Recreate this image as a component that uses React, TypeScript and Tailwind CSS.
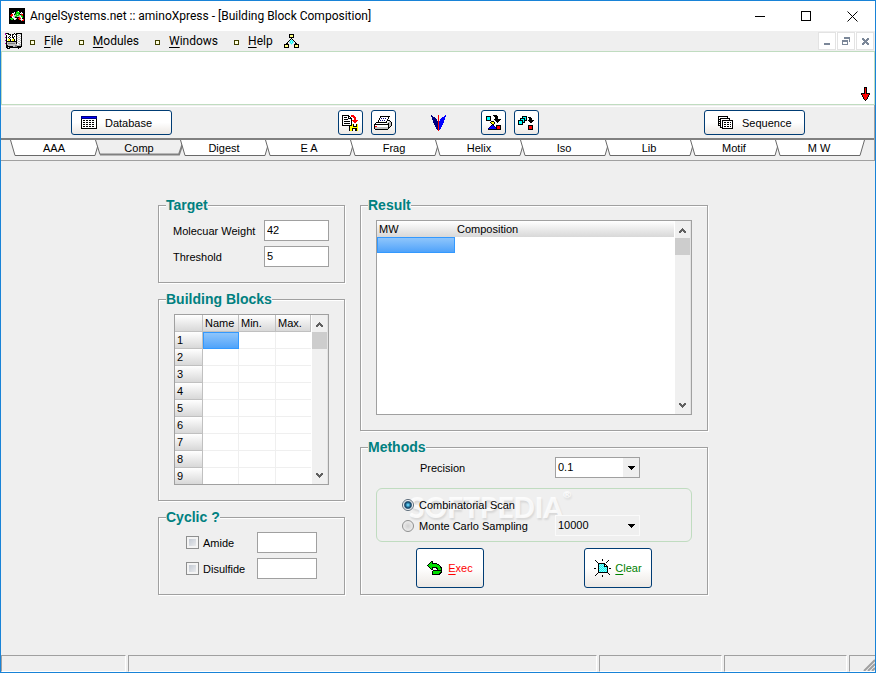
import React from 'react'

const COLORS: Record<string, string> = {
  k: '#000000',
  w: '#ffffff',
  g: '#c0c0c0',
  d: '#808080',
  r: '#ff0000',
  y: '#ffff00',
  l: '#ffff80',
  b: '#0000ff',
  n: '#000080',
  c: '#00ffff',
  t: '#a0f0f0',
  m: '#a000a0',
  v: '#00e000',
  s: '#7b8798',
  e: '#606060',
}

/* Small bitmap icons, one character per pixel */
function Sprite({ rows }: { rows: string[] }) {
  const width = Math.max(...rows.map((r) => r.length))
  return (
    <svg
      width={width}
      height={rows.length}
      viewBox={`0 0 ${width} ${rows.length}`}
      shapeRendering="crispEdges"
      className="shrink-0"
      aria-hidden="true"
    >
      {rows.map((row, y) =>
        row.split('').map((ch, x) =>
          COLORS[ch] ? <rect key={`${x}-${y}`} x={x} y={y} width={1} height={1} fill={COLORS[ch]} /> : null
        )
      )}
    </svg>
  )
}

const APP_ICON = [
  'kkkkkkkkkkkkkkkk',
  'kkkkkkkkkkkkkkkk',
  'kkkkkkkkkkkkkkkk',
  'kkkkkkkkvwkkkkkk',
  'kkkkkwkvvvvkwkkk',
  'kkkwwgkvvvkwgwkk',
  'kkrrwkvvgvvkrrkk',
  'krrrwggvvvggvrkk',
  'kkrwggvvgggwvvkk',
  'kkkwwgkkkkrgwvkk',
  'kvvvgwwgkrrrwkkk',
  'kkvvkwgkkkrgwwrk',
  'kkkkkkkkkkkkgrrk',
  'kkkkkkkkkkkkkkkk',
  'kkkkkkkkkkkkkkkk',
  'kkkkkkkkkkkkkkkk',
]

const CHILD_ICON = [
  'mkkk.....k.kkkkkk',
  'mwwkkk.kkwkkgwwgk',
  '.kwwwkwkwwwkwggwk',
  '.kwwkwwkwkwkgwwgk',
  'mkwkwkwkkwwkwggwk',
  '.kwwkwwwkwwkgwwgk',
  '.kwyykwyykwkwggwk',
  'mkwyykwyykwkgwwgk',
  '.kkkkkkkkkkkwggwk',
  '.kgggggggggkgwwgk',
  'mkgdddddddgkwggwk',
  '.kggggggggggwwggk',
  '.kkgggggggddggggk',
  '.kkkkkkkggddkkkkk',
  '.kk.kkkkkkkkkkkk.',
  '..kkk........k...',
]

const NODES_ICON = [
  '.....kkkkk.....',
  '.....klllk.....',
  '.....klllk.....',
  '.....kkkkk.....',
  '.......k.......',
  '......ktk......',
  '.....ktctk.....',
  '....ktctctk....',
  '...k.tctct.k...',
  '..kk..tct..kk..',
  'kkkkk..t..kkkkk',
  'klllk.....klllk',
  'klllk.....klllk',
  'kkkkk.....kkkkk',
]

const RED_ARROW = [
  '...kkk...',
  '...krk...',
  '...krk...',
  '...krk...',
  '...krk...',
  '...krk...',
  'kkkkrkkkk',
  'krrrrrrrk',
  '.krrrrrk.',
  '.krrrrrk.',
  '..krrrk..',
  '..krrrk..',
  '...krk...',
  '....k....',
]

const TABLE_ICON = [
  'nnnnnnnnnnnnnnnn',
  'nbbbbbbbbbbbbbbn',
  'nnnnnnnnnnnnnnnn',
  'kwwwwwwwwwwwwwwk',
  'kwkkwkkwkkwkkwwk',
  'kwwwwwwwwwwwwwwk',
  'kwkkwkkwkkwkkwwk',
  'kwwwwwwwwwwwwwwk',
  'kwkkwkkwkkwkkwwk',
  'kwwwwwwwwwwwwwwk',
  'kwkkwkkwkkwkkwwk',
  'kwwwwwwwwwwwwwwk',
  'kkkkkkkkkkkkkkkk',
]

const EXPORT_ICON = [
  'kkkkkkk..rrr....',
  'kwwwwwkk.rrrr...',
  'kwkkkwkwk..rrr..',
  'kwwwwwkkkk..rr..',
  'kwkkkkwwwk..rr..',
  'kwwwwwwwwkrrrrrr',
  'kwkkkkkkwk.rrrr.',
  'kwwwwwwwwk..rr..',
  'kwkkkkkkwk......',
  'kwwwwwwwwkykwwky',
  'kkkkkkkkkkykwwky',
  '.......kyyykkkky',
  '.......kyyyyyyyy',
  '.......kyykkkkky',
  '.......kyykwwkky',
  '.......kyykwwkky',
]

const PRINT_ICON = [
  '......kkkkkkkkkk..',
  '......kwwwwwwwk...',
  '.....kwnwnwnwwk...',
  '.....kwwwwwwwk....',
  '....kwnwnwnwwkkk..',
  '....kwwwwwwwkwwgk.',
  '..kkkkkkkkkkkwgggk',
  '.kwwwwwwwwwwwgkggk',
  'kkkkkkkkkkkkkkkggk',
  'kwwwwwwwwwwwwwkggk',
  'krrwwwwwwwwwwwkgk.',
  'kgggggggggggggkk..',
  'kgggggggggggggk...',
  '.kkkkkkkkkkkkk....',
]

const WING_ICON = [
  'n......r......b',
  'nn.....r.....bb',
  '.nnn...r...bbb.',
  '.nnnn..r..bbbb.',
  '.nnnnn.r.bbbbb.',
  '..nnnn.r.bbbb..',
  '..nnnnnrbbbbb..',
  '..nnnnnrbbbbb..',
  '...nnnnrbbbb...',
  '...nnnnrbbbb...',
  '....nnnrbbb....',
  '....nnnrbbb....',
  '.....nnrbb.....',
  '.....nnrbb.....',
  '......nrb......',
  '.......r.......',
]

const SHAPES_ICON = [
  '.......kkkk....',
  'kkkkk...kkkk...',
  'kccck....kkk...',
  'kccck....kkk...',
  'kccck...kkkkkkk',
  'kkkkk....kkkkk.',
  '.....kkk..kkk..',
  '....kyyyk..k...',
  '.....kyyk......',
  '......kk.......',
  '.....kbk..kkkkk',
  '....nbbbn.krrrk',
  '...nbbbbbnkrrrk',
  '..nbbbbbbbkrrrk',
  '..kkkkkkkkkkkkk',
]

const STACK_ICON = [
  '....kkkkk.......',
  '....kccck.kkk...',
  '..kkkkkck..kkk..',
  '..kccckck..kkk..',
  'kkkkkckkk.kkkkkk',
  'kccckck....kkkk.',
  'kccckkk.....kk..',
  'kccck...........',
  'kkkkk...........',
  '..........kkkkk.',
  '..........krrrk.',
  '..........krrrk.',
  '..........krrrk.',
  '..........kkkkk.',
]

const SHEETS_ICON = [
  'kkkkkkkkkk.....',
  'kwwwwwwwwk.....',
  'kwkkkkkkkkkk...',
  'kkkwwwwwwwwk...',
  'kwkwkkkkkkkkkkk',
  'kkkwkwwwwwwwwwk',
  'kwkwkwkkwkkwkwk',
  'kkkwkwwwwwwwwwk',
  'kwkwkwkkwkkwkwk',
  'kkkwkwwwwwwwwwk',
  '..kwkwkkwkkwkwk',
  '..kkkwwwwwwwwwk',
  '....kkkkkkkkkkk',
]

const EXEC_ICON = [
  '....kk.........',
  '...kvk.........',
  '..kvvkkkkk.....',
  '.kvvvvvvvvkk...',
  'kvvvvvvvvvvvk..',
  '.kvvvvvvvvvvvk.',
  '..kvvkkkkkvvvkk',
  '...kvk...kkvvvk',
  '....kk....kvvvk',
  '......kkkkkkkkk',
  '.....kvvvvvvvvk',
  '.....kvvvvvvvkk',
  '.....kvvvvvvkk.',
  '.....kkkkkkkk..',
]

const CLEAR_ICON = [
  '........k........',
  '.k......k.....k..',
  '..k..........k...',
  '...k........k....',
  '....kkkkkkk......',
  '....kctctckk.....',
  '....ktctctkwk....',
  '....kctctckkkk...',
  '....ktctctctck...',
  'kk..kctctctctk.kk',
  '....ktctctctck...',
  '....kctctctctk...',
  '....ktctctctck...',
  '....kkkkkkkkkk...',
  '...k..........k..',
  '..k............k.',
  '.k......k........',
  '........k........',
]

const MDI_MIN = ['ssssss', 'ssssss']

const MDI_RESTORE = ['..ssssss', '..ssssss', '.......s', 'ssssss.s', 'ssssss.s', 's....s..', 's....s..', 'ssssss..']

const MDI_CLOSE = ['ss...ss', 'sss.sss', '.sssss.', '..sss..', '.sssss.', 'sss.sss', 'ss...ss']

const CHEVRON_UP = ['...e...', '..eee..', '.eeeee.', 'eee.eee', 'ee...ee']

const CHEVRON_DOWN = ['ee...ee', 'eee.eee', '.eeeee.', '..eee..', '...e...']

const CARET = ['kkkkkkk', '.kkkkk.', '..kkk..', '...k...']

const MENUS = ['File', 'Modules', 'Windows', 'Help']
const TABS = ['AAA', 'Comp', 'Digest', 'E A', 'Frag', 'Helix', 'Iso', 'Lib', 'Motif', 'M W']
const BLOCK_ROWS = [1, 2, 3, 4, 5, 6, 7, 8, 9]

function TitleBar() {
  return (
    <header className="flex h-[30px] items-center bg-white pl-2 font-[Roboto,sans-serif] text-xs">
      <Sprite rows={APP_ICON} />
      <h1 className="ml-[5px] flex-1 whitespace-nowrap">AngelSystems.net :: aminoXpress - [Building Block Composition]</h1>
      <button aria-label="Minimize" className="flex h-full w-[46px] items-center justify-center">
        <svg width="10" height="10" shapeRendering="crispEdges">
          <path d="M0 5.5h10" stroke="#000" />
        </svg>
      </button>
      <button aria-label="Maximize" className="flex h-full w-[46px] items-center justify-center">
        <svg width="10" height="10" shapeRendering="crispEdges">
          <path d="M.5 .5h9v9h-9z" stroke="#000" fill="none" />
        </svg>
      </button>
      <button aria-label="Close" className="flex h-full w-[46px] items-center justify-center">
        <svg width="11" height="11">
          <path d="M.5 .5l10 10M10.5 .5l-10 10" stroke="#000" />
        </svg>
      </button>
    </header>
  )
}

function MdiButton({ label, rows, low }: { label: string; rows: string[]; low?: boolean }) {
  return (
    <button
      aria-label={label}
      className={`flex size-[18px] justify-center border border-[#e3e3e3] bg-white ${low ? 'items-end pb-1' : 'items-center'}`}
    >
      <Sprite rows={rows} />
    </button>
  )
}

function MenuBar() {
  return (
    <nav className="flex h-5 items-center pr-px pl-1 font-[Roboto,sans-serif] text-xs">
      <Sprite rows={CHILD_ICON} />
      <div className="ml-2 flex items-center gap-4">
        {MENUS.map((m) => (
          <button key={m} className="flex items-center gap-[9px]">
            <span className="mt-0.5 size-[5px] border border-[#404000] bg-[#ffffe0]"></span>
            <span>
              <span className="underline underline-offset-2">{m[0]}</span>
              {m.slice(1)}
            </span>
          </button>
        ))}
      </div>
      <div className="ml-[11px] flex-1">
        <Sprite rows={NODES_ICON} />
      </div>
      <div className="flex gap-px bg-white">
        <MdiButton label="Minimize child" rows={MDI_MIN} low />
        <MdiButton label="Restore child" rows={MDI_RESTORE} />
        <MdiButton label="Close child" rows={MDI_CLOSE} />
      </div>
    </nav>
  )
}

const BUTTON = 'flex items-center rounded-[3px] border border-[#003c74] bg-linear-to-b from-white from-50% to-[#ece8e4]'

function IconButton({ label, rows }: { label: string; rows: string[] }) {
  return (
    <button aria-label={label} className={`${BUTTON} size-[25px] justify-center`}>
      <Sprite rows={rows} />
    </button>
  )
}

function Toolbar() {
  return (
    <div className="mt-px flex h-8 items-center justify-between border-t border-white pr-[69px] pl-[70px]">
      <button className={`${BUTTON} h-[25px] w-[101px] gap-2 pl-[9px]`}>
        <Sprite rows={TABLE_ICON} />
        Database
      </button>
      <div className="flex items-center gap-[35px]">
        <div className="flex gap-2">
          <IconButton label="Copy" rows={EXPORT_ICON} />
          <IconButton label="Print" rows={PRINT_ICON} />
        </div>
        <Sprite rows={WING_ICON} />
        <div className="flex gap-2">
          <IconButton label="Convert" rows={SHAPES_ICON} />
          <IconButton label="Transfer" rows={STACK_ICON} />
        </div>
      </div>
      <button className={`${BUTTON} h-[25px] w-[101px] gap-[9px] pl-[13px]`}>
        <Sprite rows={SHEETS_ICON} />
        Sequence
      </button>
    </div>
  )
}

function Tab({ label, active }: { label: string; active?: boolean }) {
  return (
    <button role="tab" aria-selected={!!active} className="relative -mr-[5px] h-4 w-[90px] pr-0.5 pb-px">
      <svg className="absolute inset-0 size-full" viewBox="0 0 90 16" aria-hidden="true">
        {active ? (
          <>
            <path d="M0 -2L5 14.5H84L89 -2z" fill="#efefef" />
            <path d="M.5 0L5 14.5" stroke="#696969" fill="none" />
            <path d="M5 14.5H84L89 0" stroke="#808080" strokeWidth="2" fill="none" />
          </>
        ) : (
          <path d="M.5 0L5 15.5H85L89.5 0" fill="#fff" stroke="#696969" />
        )}
      </svg>
      <span className="relative">{label}</span>
    </button>
  )
}

function TabStrip() {
  return (
    <div className="border-b border-[#a0a0a0] pb-1">
      <div role="tablist" className="flex border-t-2 border-[#808080] pl-[9px]">
        {TABS.map((t) => (
          <Tab key={t} label={t} active={t === 'Comp'} />
        ))}
      </div>
    </div>
  )
}

function Group({ title, children }: { title: string; children: React.ReactNode }) {
  return (
    <fieldset className="min-w-0 border border-[#a0a0a0] shadow-[1px_1px_0_#fff,inset_1px_1px_0_#fff]">
      <legend className="ml-[7px] bg-[#efefef] text-sm leading-[14px] font-bold text-[#008080]">{title}</legend>
      {children}
    </fieldset>
  )
}

function ScrollBar() {
  return (
    <div className="flex w-4 flex-col items-center border-r border-[#e3e3e3] bg-[#f0f0f0]">
      <span className="flex h-[17px] items-center pt-0.5">
        <Sprite rows={CHEVRON_UP} />
      </span>
      <span className="h-[17px] w-full bg-[#cdcdcd]"></span>
      <span className="mt-auto flex h-[17px] items-center">
        <Sprite rows={CHEVRON_DOWN} />
      </span>
    </div>
  )
}

const FIELD = 'h-[21px] rounded-none border border-[#a0a0a0] bg-white outline-none'

function Target() {
  return (
    <Group title="Target">
      <div className="flex flex-col gap-[5px] pt-2 pr-[15px] pb-[15px] pl-[14px]">
        <div className="flex items-center justify-between">
          <label htmlFor="mw">Molecuar Weight</label>
          <input id="mw" defaultValue="42" className={`${FIELD} w-[65px] px-0.5 pb-0.5`} />
        </div>
        <div className="flex items-center justify-between">
          <label htmlFor="threshold">Threshold</label>
          <input id="threshold" defaultValue="5" className={`${FIELD} w-[65px] px-0.5 pb-0.5`} />
        </div>
      </div>
    </Group>
  )
}

const HEAD = 'border-r border-b border-[#c0c0c0] bg-linear-to-b from-white to-[#d8d8d8] p-0 pl-0.5 text-left font-normal'

function BuildingBlocks() {
  return (
    <Group title="Building Blocks">
      <div className="px-[15px] pt-2 pb-[15px]">
        <div className="flex h-[171px] overflow-hidden border border-[#a0a0a0] bg-white">
          <table className="mr-px h-[170px] flex-1 table-fixed border-separate border-spacing-0 leading-4">
            <thead>
              <tr className="h-[17px]">
                <th className={`${HEAD} w-7`}></th>
                <th className={`${HEAD} w-9`}>Name</th>
                <th className={`${HEAD} w-[37px]`}>Min.</th>
                <th className={HEAD}>Max.</th>
              </tr>
            </thead>
            <tbody>
              {BLOCK_ROWS.map((n) => (
                <tr key={n} className="h-[17px]">
                  <th scope="row" className={HEAD}>{n}</th>
                  <td
                    className={
                      n === 1
                        ? 'border border-[#3399ff] bg-linear-to-b from-[#8ec5fb] to-[#4fa3fa] p-0'
                        : 'border-r border-b border-[#efefef] p-0'
                    }
                  ></td>
                  <td className="border-r border-b border-[#efefef] p-0"></td>
                  <td className="border-b border-[#efefef] p-0"></td>
                </tr>
              ))}
            </tbody>
          </table>
          <ScrollBar />
        </div>
      </div>
    </Group>
  )
}

const CHECK =
  'size-[13px] appearance-none border border-[#8e8f8f] bg-linear-to-br from-[#b8c0cc] to-[#f4f4f4] shadow-[inset_0_0_0_2px_#f4f4f4] checked:bg-[#1c5180]'

function Cyclic() {
  return (
    <Group title="Cyclic ?">
      <div className="flex flex-col gap-[5px] px-[27px] pt-2 pb-[15px]">
        <div className="flex items-center justify-between">
          <label className="flex items-center gap-1">
            <input type="checkbox" className={CHECK} />
            Amide
          </label>
          <input aria-label="Amide value" className={`${FIELD} w-[60px] px-0.5`} />
        </div>
        <div className="flex items-center justify-between">
          <label className="flex items-center gap-1">
            <input type="checkbox" className={CHECK} />
            Disulfide
          </label>
          <input aria-label="Disulfide value" className={`${FIELD} w-[60px] px-0.5`} />
        </div>
      </div>
    </Group>
  )
}

function Result() {
  return (
    <Group title="Result">
      <div className="px-[15px] pt-2 pb-[15px]">
        <div className="flex h-[195px] border border-[#a0a0a0] bg-white">
          <div className="mr-px flex-1">
            <table className="w-full table-fixed border-separate border-spacing-0 leading-4">
              <thead>
                <tr className="h-4 bg-linear-to-b from-white to-[#d8d8d8]">
                  <th className="w-[78px] p-0 pl-0.5 text-left font-normal">MW</th>
                  <th className="p-0 pl-0.5 text-left font-normal">Composition</th>
                </tr>
              </thead>
              <tbody>
                <tr className="h-4">
                  <td className="border border-[#3399ff] bg-linear-to-b from-[#8ec5fb] to-[#4fa3fa] p-0"></td>
                  <td className="p-0"></td>
                </tr>
              </tbody>
            </table>
          </div>
          <ScrollBar />
        </div>
      </div>
    </Group>
  )
}

function Combo({ id, value, label, flat }: { id: string; value: string; label?: string; flat?: boolean }) {
  return (
    <div className="relative">
      <select
        id={id}
        aria-label={label}
        defaultValue={value}
        className={`block h-[21px] w-[85px] appearance-none rounded-none border pb-0.5 pl-0.5 outline-none ${
          flat ? 'border-[#fafafa] bg-[#efefef]' : 'border-[#a0a0a0] bg-white'
        }`}
      >
        <option>{value}</option>
      </select>
      <span className="pointer-events-none absolute inset-y-px right-px flex w-4 items-center justify-center bg-[#efefef]">
        <Sprite rows={CARET} />
      </span>
    </div>
  )
}

const RADIO =
  'size-3 appearance-none rounded-full border border-[#8e8f8f] bg-radial from-[#d0d0d0] to-[#f8f8f8] checked:border-[#5a6a78] checked:from-[#5cc8f0] checked:from-10% checked:via-[#0a3a5c] checked:via-45% checked:to-white checked:to-65%'

function Methods() {
  return (
    <Group title="Methods">
      <div className="px-[15px] pt-[3px] pb-1.5">
        <div className="flex items-center justify-between pr-[52px] pl-11">
          <label htmlFor="precision">Precision</label>
          <Combo id="precision" value="0.1" />
        </div>
        <div className="relative mt-2.5 rounded-md border border-[#c0dcc0] pt-1.5 pr-[51px] pb-[5px] pl-[25px]">
          <span className="pointer-events-none absolute top-1 left-8 font-[Lato,sans-serif] text-[28px] leading-7 font-black text-white/80 [text-shadow:1px_2px_2px_#0000001a]">
            SOFTPEDIA<sup className="align-top text-[10px] leading-3">®</sup>
          </span>
          <label className="relative flex h-5 w-fit items-center gap-[5px]">
            <input type="radio" name="method" defaultChecked className={RADIO} />
            Combinatorial Scan
          </label>
          <div className="flex items-center justify-between">
            <label className="relative flex h-5 items-center gap-[5px]">
              <input type="radio" name="method" className={RADIO} />
              Monte Carlo Sampling
            </label>
            <Combo id="samples" value="10000" label="Samples" flat />
          </div>
        </div>
        <div className="mt-1.5 flex justify-between px-10">
          <button className={`${BUTTON} h-10 w-[68px] justify-center gap-1.5 text-[#ff0000]`}>
            <Sprite rows={EXEC_ICON} />
            <span>
              <span className="underline underline-offset-2">E</span>xec
            </span>
          </button>
          <button className={`${BUTTON} h-10 w-[68px] justify-center gap-1 text-[#008000]`}>
            <Sprite rows={CLEAR_ICON} />
            <span>
              <span className="underline underline-offset-2">C</span>lear
            </span>
          </button>
        </div>
      </div>
    </Group>
  )
}

const PANEL = 'border border-[#a0a0a0] border-r-white border-b-white'

function StatusBar() {
  return (
    <footer className="flex h-[17px] gap-0.5">
      <div className={`${PANEL} w-[125px]`}></div>
      <div className={`${PANEL} flex-1`}></div>
      <div className={`${PANEL} w-[123px]`}></div>
      <div className={`${PANEL} w-[123px]`}></div>
      <div className={`${PANEL} flex w-[26px] items-end justify-end border-r-0`}>
        <svg width="12" height="12" aria-hidden="true">
          <path d="M1 12L12 1M5 12L12 5M9 12L12 9" stroke="#a0a0a0" strokeWidth="2" />
        </svg>
      </div>
    </footer>
  )
}

export default function App() {
  return (
    <div className="flex min-h-screen flex-col border border-[#1883d7] bg-[#efefef] font-['Liberation_Sans',Arial,sans-serif] text-[11px] leading-4 text-black">
      <TitleBar />
      <MenuBar />
      <div className="flex h-[54px] items-end justify-end border border-[#c0dcc0] bg-white pr-1 pb-[3px]">
        <Sprite rows={RED_ARROW} />
      </div>
      <div className="border-r border-[#a0a0a0]">
        <Toolbar />
        <TabStrip />
      </div>
      <main className="flex flex-1 justify-center gap-[15px] pt-[37px] pr-2.5">
        <div className="flex w-[187px] flex-col gap-[9px]">
          <Target />
          <BuildingBlocks />
          <Cyclic />
        </div>
        <div className="flex w-[348px] flex-col gap-[9px]">
          <Result />
          <Methods />
        </div>
      </main>
      <StatusBar />
    </div>
  )
}
